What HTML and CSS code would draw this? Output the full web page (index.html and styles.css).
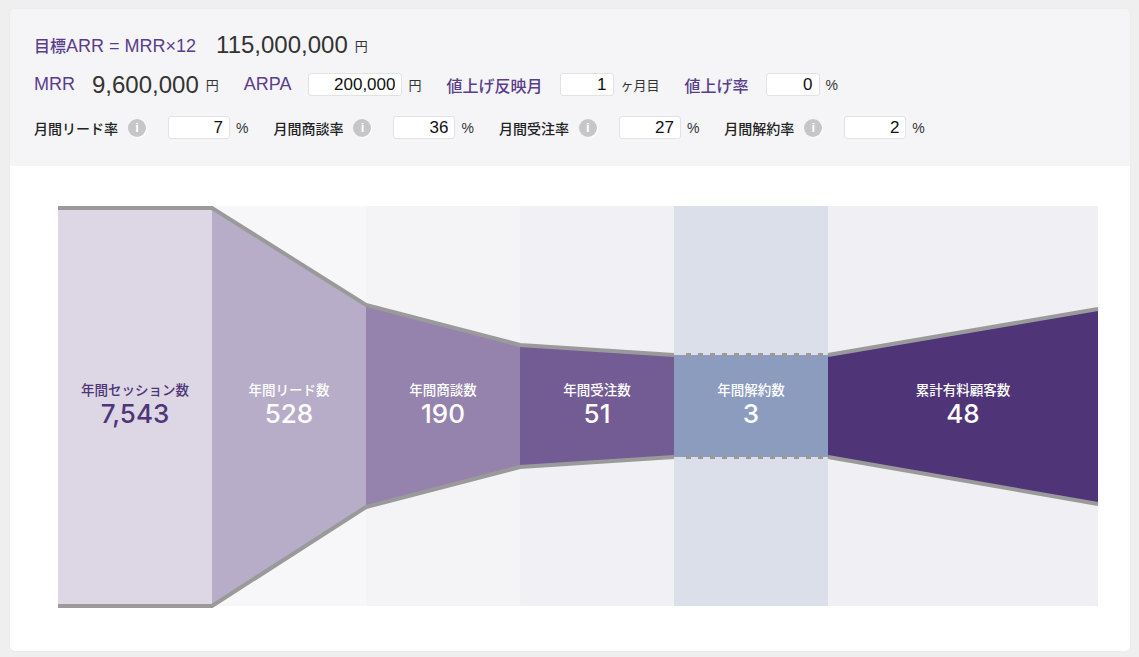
FILE: index.html
```html
<!DOCTYPE html>
<html lang="ja">
<head>
<meta charset="utf-8">
<title>ARR Funnel</title>
<link rel="stylesheet" href="styles.css">
</head>
<body>
<div class="card">
  <div class="settings">
    <div class="row r1">
      <span class="lbl">目標<span class="lat">ARR = MRR×12</span></span>
      <span class="big">115,000,000</span>
      <span class="unit">円</span>
    </div>
    <div class="row r2">
      <div class="grp">
        <span class="lbl"><span class="lat">MRR</span></span>
        <span class="big">9,600,000</span>
        <span class="unit">円</span>
      </div>
      <div class="grp">
        <span class="lbl"><span class="lat">ARPA</span></span>
        <input class="inp w94" type="text" value="200,000">
        <span class="unit u6">円</span>
      </div>
      <div class="grp">
        <span class="lbl">値上げ反映月</span>
        <input class="inp w54" type="text" value="1">
        <span class="unit">ヶ月目</span>
      </div>
      <div class="grp">
        <span class="lbl">値上げ率</span>
        <input class="inp w54" type="text" value="0">
        <span class="unit pct">%</span>
      </div>
    </div>
    <div class="row r3">
      <div class="grp">
        <span class="slbl">月間リード率</span>
        <span class="info">i</span>
        <input class="inp w62" type="text" value="7">
        <span class="unit pct">%</span>
      </div>
      <div class="grp">
        <span class="slbl">月間商談率</span>
        <span class="info">i</span>
        <input class="inp w62" type="text" value="36">
        <span class="unit pct">%</span>
      </div>
      <div class="grp">
        <span class="slbl">月間受注率</span>
        <span class="info">i</span>
        <input class="inp w62" type="text" value="27">
        <span class="unit pct">%</span>
      </div>
      <div class="grp">
        <span class="slbl">月間解約率</span>
        <span class="info">i</span>
        <input class="inp w62" type="text" value="2">
        <span class="unit pct">%</span>
      </div>
    </div>
  </div>
  <div class="funnel">
    <div class="chart">
      <svg class="shapes" width="1040" height="400" viewBox="0 0 1040 400" aria-hidden="true">
        <rect x="0" y="2" width="154" height="398" fill="#dcd6e5"/>
        <polygon points="154,2 308,99 308,301 154,400" fill="#b7adc9"/>
        <polygon points="308,99 462,139 462,261 308,301" fill="#9583ad"/>
        <polygon points="462,139 616,149 616,251 462,261" fill="#735b93"/>
        <rect x="616" y="149" width="154" height="102" fill="#8b9cbf"/>
        <polygon points="770,149 1040,103 1040,298 770,251" fill="#4f3478"/>
        <polyline points="0,2 154,2 308,99 462,139 616,149" fill="none" stroke="#9a9a9a" stroke-width="4"/>
        <polyline points="0,400 154,400 308,301 462,261 616,251" fill="none" stroke="#9a9a9a" stroke-width="4"/>
        <line x1="628" y1="149" x2="770" y2="149" stroke="#9a9a9a" stroke-width="4" stroke-dasharray="5 7"/>
        <line x1="628" y1="251" x2="770" y2="251" stroke="#9a9a9a" stroke-width="4" stroke-dasharray="5 7"/>
        <polyline points="770,149 1040,103" fill="none" stroke="#9a9a9a" stroke-width="4"/>
        <polyline points="770,251 1040,298" fill="none" stroke="#9a9a9a" stroke-width="4"/>
      </svg>
      <div class="col c1"><div class="tag dark"><span class="name">年間セッション数</span><span class="num">7,543</span></div></div>
      <div class="col c2"><div class="tag"><span class="name">年間リード数</span><span class="num">528</span></div></div>
      <div class="col c3"><div class="tag"><span class="name">年間商談数</span><span class="num">190</span></div></div>
      <div class="col c4"><div class="tag"><span class="name">年間受注数</span><span class="num">51</span></div></div>
      <div class="col c5"><div class="tag"><span class="name">年間解約数</span><span class="num">3</span></div></div>
      <div class="col c6"><div class="tag"><span class="name">累計有料顧客数</span><span class="num">48</span></div></div>
    </div>
  </div>
</div>
</body>
</html>
```

FILE: styles.css
```css
* { box-sizing: border-box; }
html, body { margin: 0; }
body {
  background: #efeff0;
  padding: 9px 9px 6px 10px;
  font-family: "Liberation Sans", "Noto Sans CJK JP", sans-serif;
  color: #333;
}
.card {
  width: 1120px;
  height: 642px;
  background: #fff;
  border-radius: 6px;
  overflow: hidden;
  box-shadow: 0 0 2px rgba(0,0,0,0.06);
  display: flex;
  flex-direction: column;
}
.settings {
  background: #f5f5f7;
  padding: 24px 24px 0;
  height: 157px;
  flex: none;
}
.row { display: flex; align-items: center; }
.r1 { height: 24px; }
.r2 { height: 23px; margin-top: 16px; gap: 25px; }
.r3 { height: 23px; margin-top: 20px; gap: 25px; }
.grp { display: flex; align-items: center; }
.lbl {
  color: #5a3d8c;
  font-size: 16px;
  font-weight: 500;
  margin-right: 17px;
  white-space: nowrap;
}
.r1 .lbl { margin-right: 20px; }
.lbl .lat { font-size: 18px; font-weight: 400; }
.big { font-size: 24px; color: #333; white-space: nowrap; }
.unit { font-size: 13px; margin-left: 7px; color: #333; white-space: nowrap; }
.unit.u6 { margin-left: 6px; }
.unit.pct { font-size: 14px; margin-left: 6px; }
.inp {
  height: 23px;
  border: 1px solid #e2e2e6;
  border-radius: 3px;
  background: #fff;
  font-family: "Liberation Sans", sans-serif;
  font-size: 17px;
  text-align: right;
  padding: 0 6px;
  color: #111;
  outline: none;
}
.w94 { width: 94px; }
.w62 { width: 62px; }
.w54 { width: 54px; }
.slbl { font-size: 14px; font-weight: 500; color: #222; margin-right: 10px; white-space: nowrap; }
.info {
  width: 18px;
  height: 18px;
  border-radius: 50%;
  background: #c6c6c8;
  color: #fff;
  font-weight: 700;
  font-size: 13px;
  line-height: 18px;
  text-align: center;
  margin-right: 22px;
  box-shadow: 1px 1px 1px rgba(255,255,255,0.95);
  font-family: "Liberation Sans", sans-serif;
}
.funnel {
  flex: 1;
  background: #fff;
  padding: 40px 32px 45px 48px;
}
.chart {
  position: relative;
  width: 1040px;
  height: 400px;
  display: flex;
}
.shapes { position: absolute; left: 0; top: 0; overflow: visible; }
.col {
  width: 154px;
  flex: none;
  display: flex;
  align-items: center;
  justify-content: center;
}
.c1 { background: #dcd6e5; }
.c2 { background: #f7f7f9; }
.c3 { background: #f4f4f7; }
.c4 { background: #f1f0f4; }
.c5 { background: #dbdfe9; }
.c6 { background: #efeff4; flex: 1; width: auto; }
.tag {
  position: relative;
  z-index: 1;
  display: flex;
  flex-direction: column;
  align-items: center;
  color: #fff;
  margin-top: -1px;
}
.tag.dark { color: #4f3477; }
.name { font-size: 13.5px; font-weight: 500; line-height: 18px; }
.num { font-family: Inter, "Liberation Sans", sans-serif; font-size: 26px; font-weight: 500; line-height: 30px; margin-top: -1px; }
```
